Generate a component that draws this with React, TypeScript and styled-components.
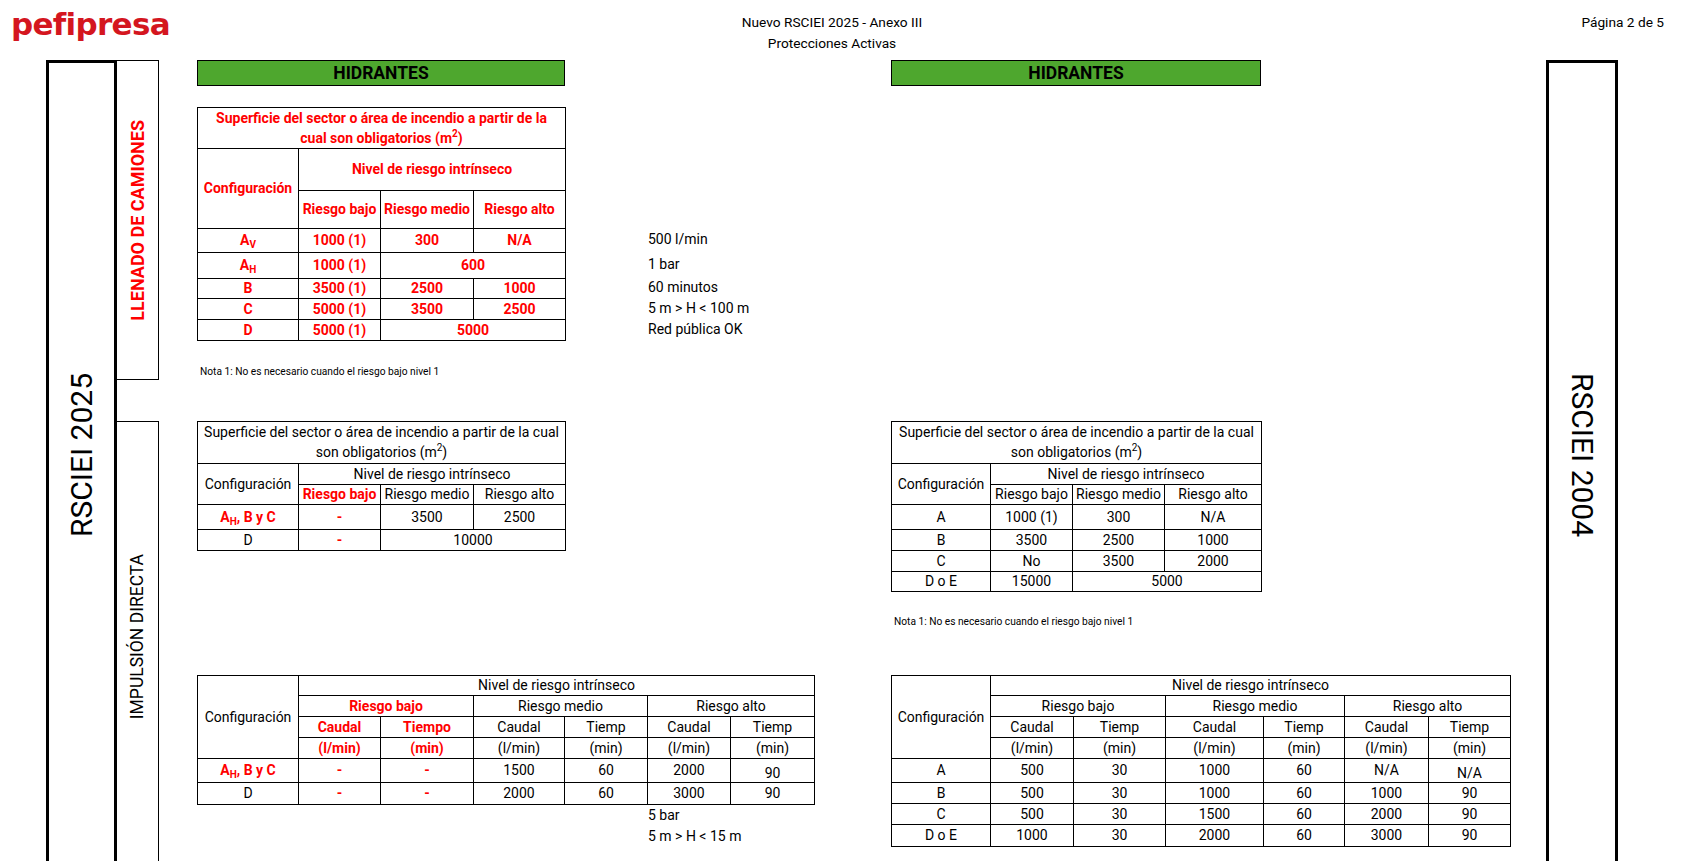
import React from 'react';
import styled, { createGlobalStyle } from 'styled-components';

const SHEET = `Roboto, "Liberation Sans", Arial, sans-serif`;
const ARIAL = `"Liberation Sans", Arial, sans-serif`;
const RED = '#ff0000';

const GlobalStyle = createGlobalStyle`
  html, body { margin: 0; padding: 0; background: #ffffff; }
  body { font-family: ${ARIAL}; color: #000000; }
  * { box-sizing: border-box; }
`;

const Page = styled.div`
  width: 1688px;
  height: 861px;
  overflow: hidden;
  background: #ffffff;
  display: flex;
  flex-direction: column;
`;

const Header = styled.header`
  flex: none;
  height: 60px;
  display: grid;
  grid-template-columns: 721px 200px 1fr;
  padding: 0 24px 0 11px;
`;

const Logo = styled.div`
  font-family: "DejaVu Sans", ${ARIAL};
  font-weight: 700;
  font-size: 31px;
  line-height: 31px;
  letter-spacing: -0.7px;
  color: #d4161f;
  padding-top: 9px;
`;

const DocTitle = styled.div`
  padding-top: 12px;
  font-family: ${SHEET};
  font-size: 13.7px;
  line-height: 21px;
  text-align: center;
  white-space: nowrap;
`;

const PageNumber = styled.div`
  padding-top: 12px;
  font-family: ${SHEET};
  font-size: 13.7px;
  line-height: 21px;
  text-align: right;
`;

const Body = styled.div`
  flex: none;
  height: 830px;
  display: flex;
  padding-left: 46px;
`;

const RegulationBox = styled.div<{ $w: number }>`
  flex: none;
  width: ${p => p.$w}px;
  border: 3px solid #000000;
  display: flex;
  align-items: center;
  justify-content: center;
  padding-bottom: 40px;
`;

const CategoryColumn = styled.div`
  flex: none;
  width: 42px;
  display: flex;
  flex-direction: column;
  gap: 41px;
`;

const CategoryBox = styled.div<{ $h?: number; $shift: number }>`
  ${p => (p.$h ? `height: ${p.$h}px; flex: none;` : 'flex: 1;')}
  border: 1px solid #000000;
  border-left: none;
  display: flex;
  align-items: center;
  justify-content: center;
  padding-bottom: ${p => p.$shift}px;
`;

const VerticalText = styled.span<{ $dir: 'up' | 'down'; $size: number; $bold?: boolean; $red?: boolean }>`
  writing-mode: vertical-rl;
  transform: ${p => (p.$dir === 'up' ? 'rotate(180deg)' : 'none')};
  font-family: ${SHEET};
  font-size: ${p => p.$size}px;
  font-weight: ${p => (p.$bold ? 700 : 400)};
  color: ${p => (p.$red ? RED : '#000000')};
  white-space: nowrap;
  line-height: 1;
`;

const Content = styled.main`
  flex: none;
  width: 1387px;
  display: grid;
  grid-template-columns: 38px 368px 82px 167px 77px 370px 249px 36px;
  grid-template-rows: 26px 21px 232px 82px 170px 84px 129px 42px;
`;

const Area = styled.div<{ $col: string; $row: string; $end?: boolean }>`
  grid-column: ${p => p.$col};
  grid-row: ${p => p.$row};
  align-self: ${p => (p.$end ? 'end' : 'start')};
  min-width: 0;
`;

const GreenBar = styled.div`
  height: 26px;
  background: #4ea72e;
  border: 1px solid #000000;
  display: flex;
  align-items: center;
  justify-content: center;
  font-family: ${SHEET};
  font-weight: 700;
  font-size: 17.5px;
`;

const Table = styled.table<{ $w: number; $accent?: boolean }>`
  width: ${p => p.$w}px;
  table-layout: fixed;
  border-collapse: collapse;
  font-family: ${SHEET};
  font-size: 14px;
  color: ${p => (p.$accent ? RED : '#000000')};
  font-weight: ${p => (p.$accent ? 700 : 400)};
`;

const Col = styled.col<{ $w: number }>`
  width: ${p => p.$w}px;
`;

const Row = styled.tr<{ $h: number }>`
  height: ${p => p.$h}px;
`;

const Cell = styled.td<{ $red?: boolean; $low?: boolean }>`
  border: 1px solid #000000;
  padding: 0;
  text-align: center;
  vertical-align: ${p => (p.$low ? 'bottom' : 'middle')};
  white-space: nowrap;
  line-height: 17px;
  color: ${p => (p.$red ? RED : 'inherit')};
  font-weight: ${p => (p.$red ? 700 : 'inherit')};
`;

const TitleCell = styled(Cell)`
  line-height: 20px;
  vertical-align: top;
`;

const Sub = styled.sub`
  font-size: 10px;
  line-height: 0;
  vertical-align: -3px;
`;

const Sup = styled.sup`
  font-size: 10px;
  line-height: 0;
  vertical-align: 6px;
`;

const NoteList = styled.div`
  display: flex;
  flex-direction: column;
  padding-left: 1px;
`;

const NoteLine = styled.div<{ $h: number }>`
  height: ${p => p.$h}px;
  display: flex;
  align-items: center;
  font-family: ${SHEET};
  font-size: 14px;
  white-space: nowrap;
`;

const Footnote = styled.div<{ $top: number }>`
  margin-top: ${p => p.$top}px;
  padding-left: 3px;
  font-family: ${SHEET};
  font-size: 10.2px;
  line-height: 14px;
  white-space: nowrap;
`;

const M2 = () => (
  <>
    (m<Sup>2</Sup>)
  </>
);

const AH = () => (
  <>
    A<Sub>H</Sub>, B y C
  </>
);

const LlenadoTable = () => (
  <Table $w={368} $accent>
    <colgroup>
      <Col $w={101} />
      <Col $w={82} />
      <Col $w={93} />
      <Col $w={92} />
    </colgroup>
    <tbody>
      <Row $h={40}>
        <TitleCell colSpan={4}>
          Superficie del sector o área de incendio a partir de la
          <br />
          cual son obligatorios <M2 />
        </TitleCell>
      </Row>
      <Row $h={42}>
        <Cell rowSpan={2}>Configuración</Cell>
        <Cell colSpan={3}>Nivel de riesgo intrínseco</Cell>
      </Row>
      <Row $h={38}>
        <Cell>Riesgo bajo</Cell>
        <Cell>Riesgo medio</Cell>
        <Cell>Riesgo alto</Cell>
      </Row>
      <Row $h={24}>
        <Cell>
          A<Sub>V</Sub>
        </Cell>
        <Cell>1000 (1)</Cell>
        <Cell>300</Cell>
        <Cell>N/A</Cell>
      </Row>
      <Row $h={26}>
        <Cell>
          A<Sub>H</Sub>
        </Cell>
        <Cell>1000 (1)</Cell>
        <Cell colSpan={2}>600</Cell>
      </Row>
      <Row $h={20}>
        <Cell>B</Cell>
        <Cell>3500 (1)</Cell>
        <Cell>2500</Cell>
        <Cell>1000</Cell>
      </Row>
      <Row $h={21}>
        <Cell>C</Cell>
        <Cell>5000 (1)</Cell>
        <Cell>3500</Cell>
        <Cell>2500</Cell>
      </Row>
      <Row $h={21}>
        <Cell>D</Cell>
        <Cell>5000 (1)</Cell>
        <Cell colSpan={2}>5000</Cell>
      </Row>
    </tbody>
  </Table>
);

const SurfaceHead = ({ redLow }: { redLow?: boolean }) => (
  <>
    <Row $h={42}>
      <TitleCell colSpan={4}>
        Superficie del sector o área de incendio a partir de la cual
        <br />
        son obligatorios <M2 />
      </TitleCell>
    </Row>
    <Row $h={21}>
      <Cell rowSpan={2}>Configuración</Cell>
      <Cell colSpan={3}>Nivel de riesgo intrínseco</Cell>
    </Row>
    <Row $h={20}>
      <Cell $red={redLow}>Riesgo bajo</Cell>
      <Cell>Riesgo medio</Cell>
      <Cell>Riesgo alto</Cell>
    </Row>
  </>
);

const Impulsion2025Table = () => (
  <Table $w={368}>
    <colgroup>
      <Col $w={101} />
      <Col $w={82} />
      <Col $w={93} />
      <Col $w={92} />
    </colgroup>
    <tbody>
      <SurfaceHead redLow />
      <Row $h={25}>
        <Cell $red>
          <AH />
        </Cell>
        <Cell $red>-</Cell>
        <Cell>3500</Cell>
        <Cell>2500</Cell>
      </Row>
      <Row $h={21}>
        <Cell>D</Cell>
        <Cell $red>-</Cell>
        <Cell colSpan={2}>10000</Cell>
      </Row>
    </tbody>
  </Table>
);

const surface2004: { cfg: string; cells: { v: string; span?: number }[]; h: number }[] = [
  { cfg: 'A', cells: [{ v: '1000 (1)' }, { v: '300' }, { v: 'N/A' }], h: 25 },
  { cfg: 'B', cells: [{ v: '3500' }, { v: '2500' }, { v: '1000' }], h: 21 },
  { cfg: 'C', cells: [{ v: 'No' }, { v: '3500' }, { v: '2000' }], h: 21 },
  { cfg: 'D o E', cells: [{ v: '15000' }, { v: '5000', span: 2 }], h: 20 },
];

const Surface2004Table = () => (
  <Table $w={370}>
    <colgroup>
      <Col $w={99} />
      <Col $w={82} />
      <Col $w={92} />
      <Col $w={97} />
    </colgroup>
    <tbody>
      <SurfaceHead />
      {surface2004.map(r => (
        <Row $h={r.h} key={r.cfg}>
          <Cell>{r.cfg}</Cell>
          {r.cells.map((c, i) => (
            <Cell key={i} colSpan={c.span}>
              {c.v}
            </Cell>
          ))}
        </Row>
      ))}
    </tbody>
  </Table>
);

const FlowHead = ({ redLow }: { redLow?: boolean }) => (
  <>
    <Row $h={20}>
      <Cell rowSpan={4}>Configuración</Cell>
      <Cell colSpan={6}>Nivel de riesgo intrínseco</Cell>
    </Row>
    <Row $h={21}>
      <Cell colSpan={2} $red={redLow}>
        Riesgo bajo
      </Cell>
      <Cell colSpan={2}>Riesgo medio</Cell>
      <Cell colSpan={2}>Riesgo alto</Cell>
    </Row>
    <Row $h={21}>
      <Cell $red={redLow}>Caudal</Cell>
      <Cell $red={redLow}>{redLow ? 'Tiempo' : 'Tiemp'}</Cell>
      <Cell>Caudal</Cell>
      <Cell>Tiemp</Cell>
      <Cell>Caudal</Cell>
      <Cell>Tiemp</Cell>
    </Row>
    <Row $h={21}>
      <Cell $red={redLow}>(l/min)</Cell>
      <Cell $red={redLow}>(min)</Cell>
      <Cell>(l/min)</Cell>
      <Cell>(min)</Cell>
      <Cell>(l/min)</Cell>
      <Cell>(min)</Cell>
    </Row>
  </>
);

const Flow2025Table = () => (
  <Table $w={617}>
    <colgroup>
      {[101, 82, 93, 91, 83, 83, 84].map((w, i) => (
        <Col $w={w} key={i} />
      ))}
    </colgroup>
    <tbody>
      <FlowHead redLow />
      <Row $h={24}>
        <Cell $red>
          <AH />
        </Cell>
        <Cell $red>-</Cell>
        <Cell $red>-</Cell>
        <Cell>1500</Cell>
        <Cell>60</Cell>
        <Cell>2000</Cell>
        <Cell $low>90</Cell>
      </Row>
      <Row $h={22}>
        <Cell>D</Cell>
        <Cell $red>-</Cell>
        <Cell $red>-</Cell>
        <Cell>2000</Cell>
        <Cell>60</Cell>
        <Cell>3000</Cell>
        <Cell>90</Cell>
      </Row>
    </tbody>
  </Table>
);

const flow2004: { cfg: string; v: string[]; h: number }[] = [
  { cfg: 'A', v: ['500', '30', '1000', '60', 'N/A', 'N/A'], h: 24 },
  { cfg: 'B', v: ['500', '30', '1000', '60', '1000', '90'], h: 21 },
  { cfg: 'C', v: ['500', '30', '1500', '60', '2000', '90'], h: 21 },
  { cfg: 'D o E', v: ['1000', '30', '2000', '60', '3000', '90'], h: 22 },
];

const Flow2004Table = () => (
  <Table $w={619}>
    <colgroup>
      {[99, 83, 92, 98, 81, 84, 82].map((w, i) => (
        <Col $w={w} key={i} />
      ))}
    </colgroup>
    <tbody>
      <FlowHead />
      {flow2004.map(r => (
        <Row $h={r.h} key={r.cfg}>
          <Cell>{r.cfg}</Cell>
          {r.v.map((v, i) => (
            <Cell key={i} $low={r.cfg === 'A' && i === 5}>
              {v}
            </Cell>
          ))}
        </Row>
      ))}
    </tbody>
  </Table>
);

const NOTE_TEXT = 'Nota 1: No es necesario cuando el riesgo bajo nivel 1';

export default function App() {
  return (
    <>
      <GlobalStyle />
      <Page>
        <Header>
          <Logo>pefipresa</Logo>
          <DocTitle>
            Nuevo RSCIEI 2025 - Anexo III
            <br />
            Protecciones Activas
          </DocTitle>
          <PageNumber>Página 2 de 5</PageNumber>
        </Header>
        <Body>
          <RegulationBox $w={71}>
            <VerticalText $dir="up" $size={30}>
              RSCIEI 2025
            </VerticalText>
          </RegulationBox>
          <CategoryColumn>
            <CategoryBox $h={320} $shift={0}>
              <VerticalText $dir="up" $size={18} $bold $red>
                LLENADO DE CAMIONES
              </VerticalText>
            </CategoryBox>
            <CategoryBox $shift={38}>
              <VerticalText $dir="up" $size={17.5}>
                IMPULSIÓN DIRECTA
              </VerticalText>
            </CategoryBox>
          </CategoryColumn>
          <Content>
            <Area $col="2" $row="1">
              <GreenBar>HIDRANTES</GreenBar>
            </Area>
            <Area $col="6" $row="1">
              <GreenBar>HIDRANTES</GreenBar>
            </Area>
            <Area $col="2" $row="3">
              <LlenadoTable />
            </Area>
            <Area $col="4" $row="3" $end>
              <NoteList>
                <NoteLine $h={24}>500 l/min</NoteLine>
                <NoteLine $h={26}>1 bar</NoteLine>
                <NoteLine $h={20}>60 minutos</NoteLine>
                <NoteLine $h={21}>5 m &gt; H &lt; 100 m</NoteLine>
                <NoteLine $h={21}>Red pública OK</NoteLine>
              </NoteList>
            </Area>
            <Area $col="2" $row="4">
              <Footnote $top={26}>{NOTE_TEXT}</Footnote>
            </Area>
            <Area $col="2" $row="5">
              <Impulsion2025Table />
            </Area>
            <Area $col="6" $row="5">
              <Surface2004Table />
            </Area>
            <Area $col="6" $row="6">
              <Footnote $top={24}>{NOTE_TEXT}</Footnote>
            </Area>
            <Area $col="2 / span 3" $row="7">
              <Flow2025Table />
            </Area>
            <Area $col="4" $row="8">
              <NoteList>
                <NoteLine $h={22}>5 bar</NoteLine>
                <NoteLine $h={20}>5 m &gt; H &lt; 15 m</NoteLine>
              </NoteList>
            </Area>
            <Area $col="6 / span 2" $row="7 / span 2">
              <Flow2004Table />
            </Area>
          </Content>
          <RegulationBox $w={72}>
            <VerticalText $dir="down" $size={30}>
              RSCIEI 2004
            </VerticalText>
          </RegulationBox>
        </Body>
      </Page>
    </>
  );
}
